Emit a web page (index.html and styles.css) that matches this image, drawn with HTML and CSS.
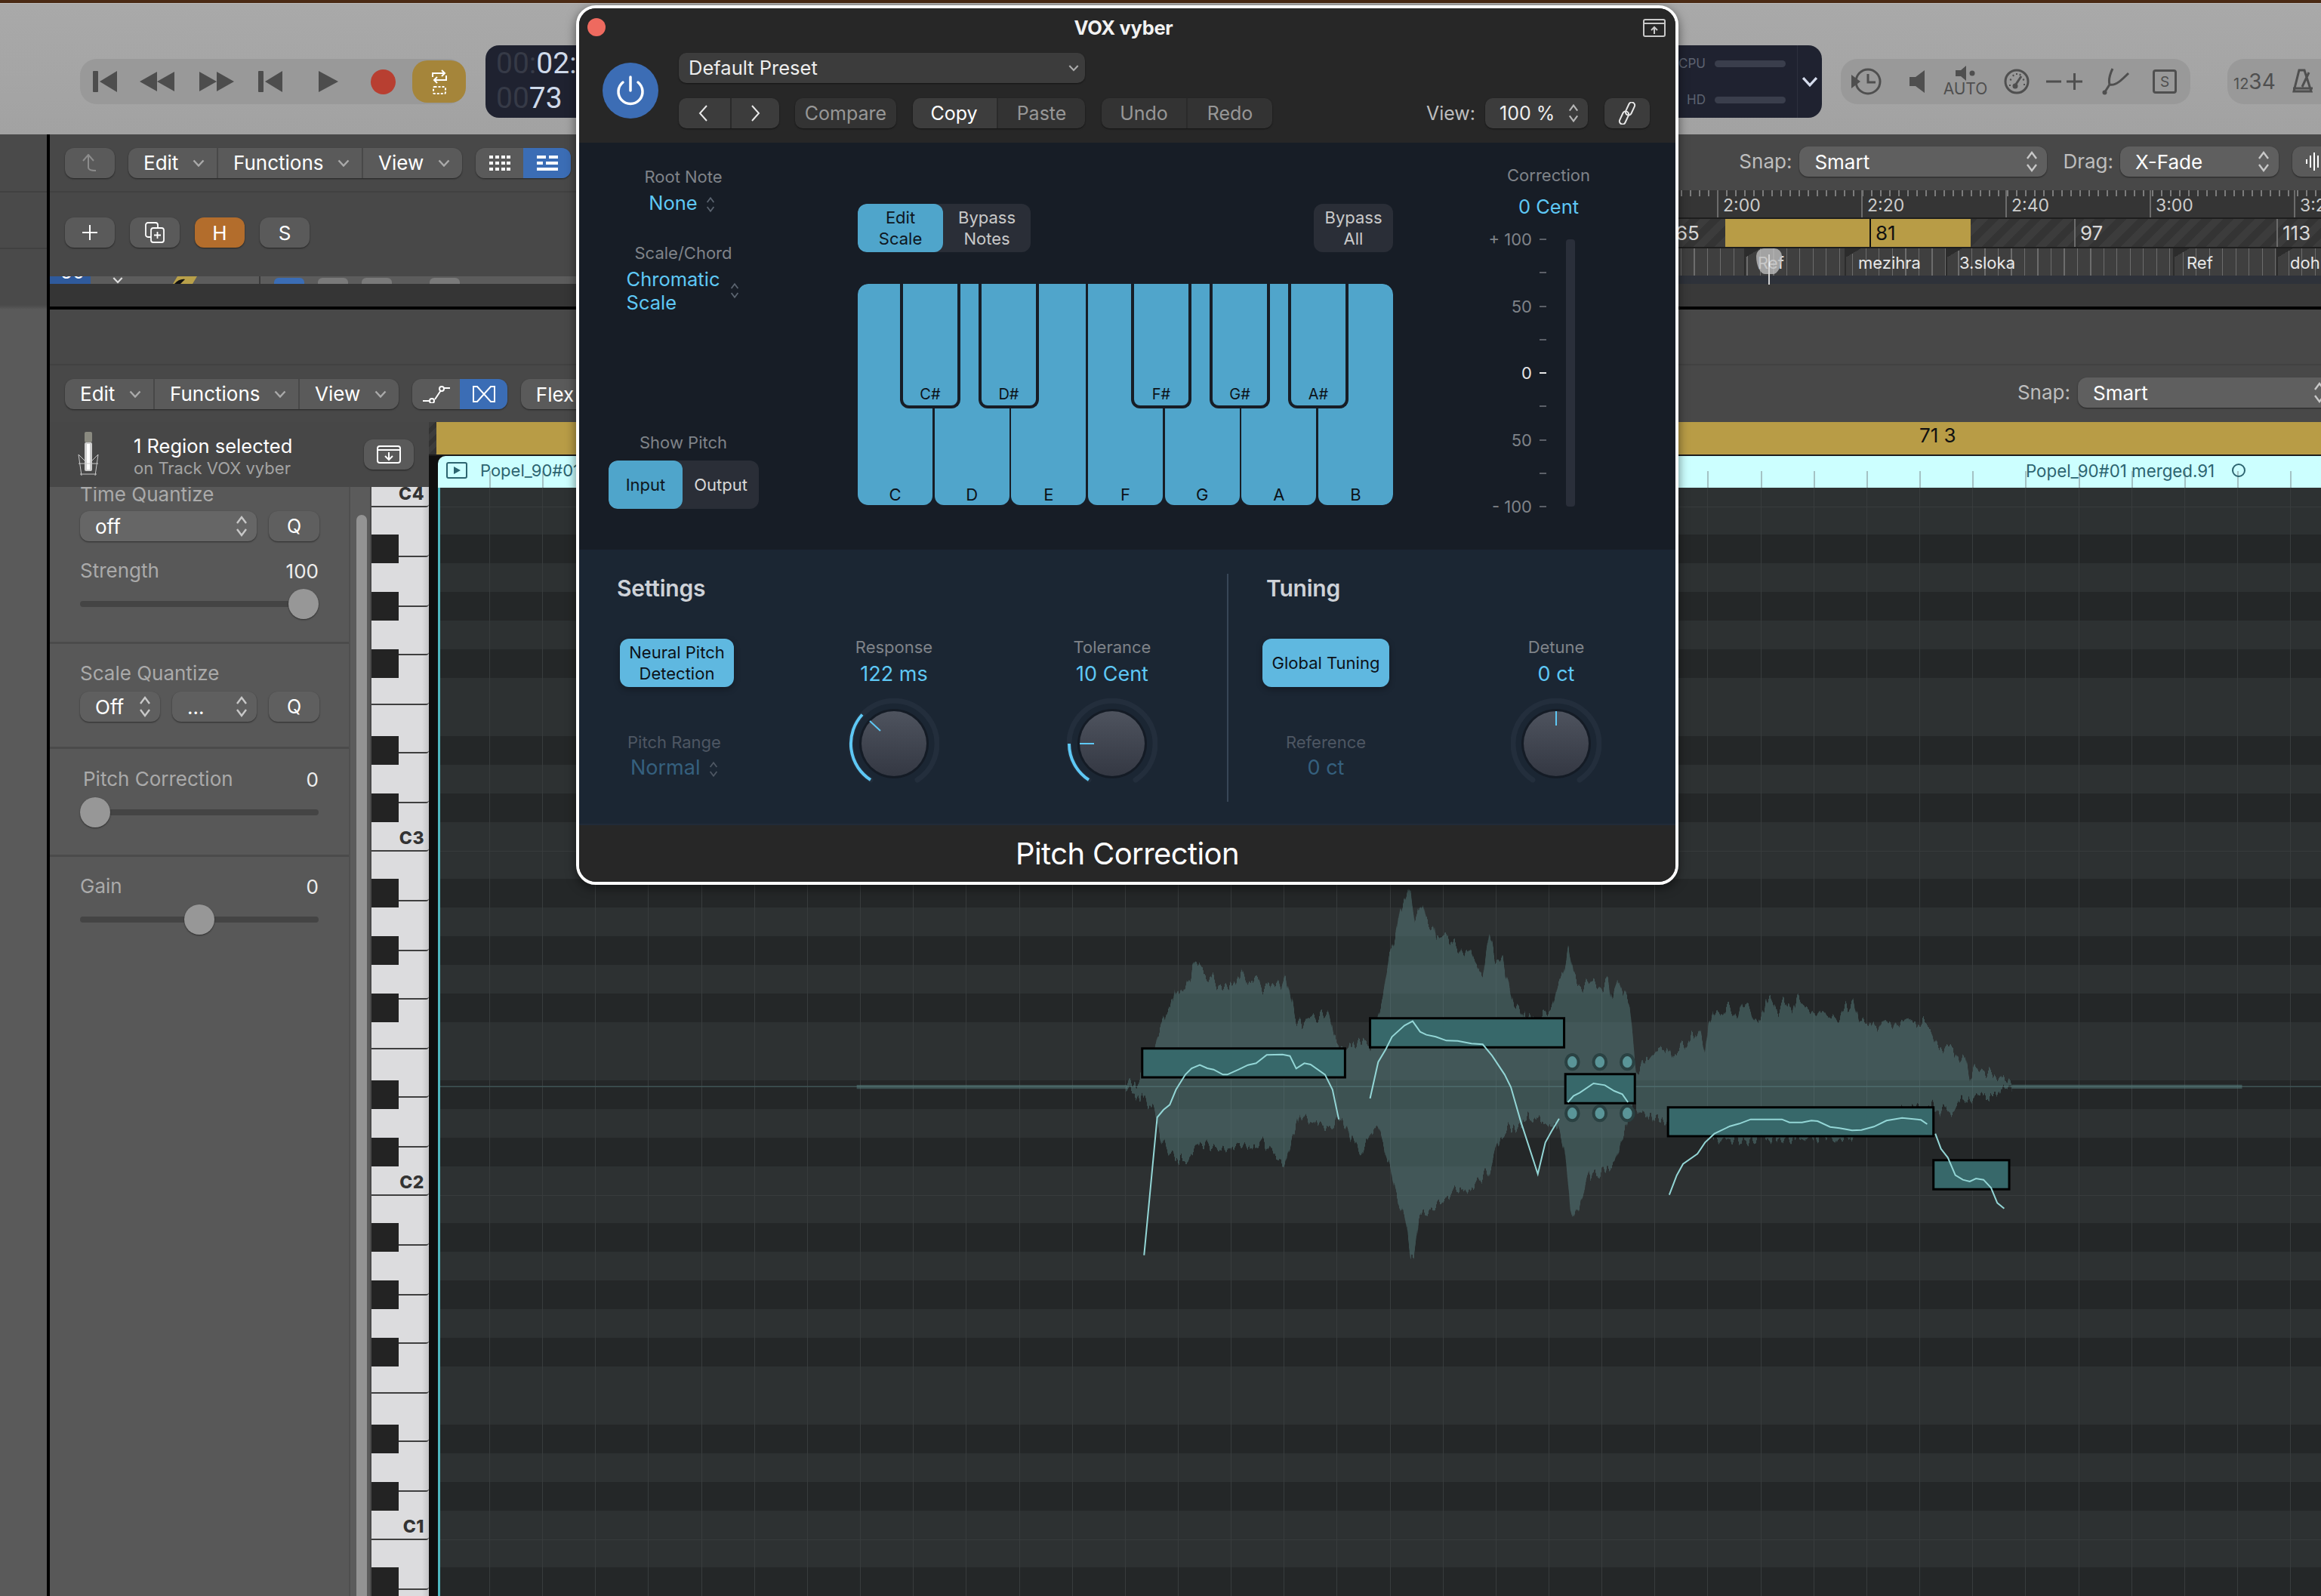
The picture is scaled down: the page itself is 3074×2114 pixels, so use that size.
FILE: index.html
```html
<!DOCTYPE html>
<html lang="en">
<head>
<meta charset="utf-8">
<title>VOX vyber - Pitch Correction</title>
<link rel="stylesheet" href="styles.css">
</head>
<body>
<svg class="sprite" width="0" height="0" aria-hidden="true">
  <defs>
    <linearGradient id="knobface" x1="0" y1="0" x2="0" y2="1"><stop offset="0" stop-color="#4e535e"/><stop offset="1" stop-color="#343843"/></linearGradient>
    <filter id="jag" filterUnits="userSpaceOnUse" x="-100" y="-100" width="2200" height="1800" color-interpolation-filters="sRGB">
      <feTurbulence type="fractalNoise" baseFrequency="0.16 0.004" numOctaves="2" seed="7" result="n"/>
      <feColorMatrix in="n" type="matrix" values="1 0 0 0 0  0 0 0 0 .5  0 0 0 0 0  0 0 0 0 1" result="m"/>
      <feDisplacementMap in="SourceGraphic" in2="m" scale="110" xChannelSelector="G" yChannelSelector="R"/>
    </filter>
  </defs>
  <symbol id="chev" viewBox="0 0 16 10"><path d="M1.5 1.5 8 8.5l6.500-7" fill="none" stroke="currentColor" stroke-width="2.400"/></symbol>
  <symbol id="updown" viewBox="0 0 16 30"><path d="M2 11 8 3l6 8M2 19l6 8 6-8" fill="none" stroke="currentColor" stroke-width="2.400"/></symbol>
</svg>
<div class="app">
  <div class="wood"></div>
  <header class="transport">
    <div class="tgroup">
      <svg class="ti" width="32" height="28" viewBox="0 0 32 28"><rect width="7" height="28" rx="1"/><path d="M32 0v28L9 14z"/></svg>
      <svg class="ti" width="46" height="26" viewBox="0 0 46 26"><path d="M23 0v26L0 13zM46 0v26L23 13z"/></svg>
      <svg class="ti" width="46" height="26" viewBox="0 0 46 26"><path d="M0 0v26l23-13zM23 0v26l23-13z"/></svg>
      <svg class="ti" width="32" height="28" viewBox="0 0 32 28"><rect width="7" height="28" rx="1"/><path d="M32 0v28L9 14z"/></svg>
      <svg class="ti" width="26" height="28" viewBox="0 0 26 28"><path d="M0 0v28l26-14z"/></svg>
      <span class="rec"></span>
      <span class="cycle">
        <svg width="24" height="34" viewBox="0 0 24 34" fill="none" stroke="#fff" stroke-width="2"><path d="M3 11V6h15M15 2l4 4-4 4M21 9v6H6M9 11l-4 4 4 4"/><rect x="4" y="24" width="16" height="9" rx="1.500" stroke-dasharray="3 2"/></svg>
      </span>
    </div>
    <div class="lcd">
      <div class="clock">
        <div><span class="dim">00:</span>02:</div>
        <div><span class="dim">00</span>73</div>
      </div>
      <div class="meters">
        <div class="meter-labels">
          <div class="mrow"><span class="mlabel">CPU</span><span class="mbar"></span></div>
          <div class="mrow"><span class="mlabel">HD</span><span class="mbar"></span></div>
        </div>
        <div class="mchev"><svg width="22" height="14"><use href="#chev"/></svg></div>
      </div>
    </div>
    <div class="igroup">
      <svg class="gi" width="42" height="36" viewBox="0 0 42 36" fill="none" stroke="#4f4f4f" stroke-width="3"><circle cx="23" cy="18" r="16"/><path d="M23 8v11h10"/><path d="M1 9v18l12-9z" fill="#4f4f4f" stroke="none"/></svg>
      <svg class="gi" width="20" height="30" viewBox="0 0 20 30"><path d="M20 0v30L8 21H0V9h8z" fill="#4f4f4f"/></svg>
      <div class="auto"><svg width="26" height="20" viewBox="0 0 26 20"><path d="M14 0v20l-7-6H0V6h7z" fill="#4f4f4f"/><circle cx="22" cy="10" r="3.500" fill="#4f4f4f"/></svg><span>AUTO</span></div>
      <svg class="gi" width="34" height="34" viewBox="0 0 34 34" fill="none" stroke="#4f4f4f" stroke-width="3"><circle cx="17" cy="17" r="15"/><path d="M15 22 23 10" /><circle cx="15" cy="23" r="2" fill="#4f4f4f"/><path d="M7 22h2M8 14l2 1M12 8l1 2M17 6v2M22 7l-1 2M26 21h2M27 14l-2 1" stroke-width="2"/></svg>
      <svg class="gi" width="48" height="22" viewBox="0 0 48 22" fill="none" stroke="#4f4f4f" stroke-width="3"><path d="M0 11h20M27 11h21M37.500 0v22"/></svg>
      <svg class="gi" width="38" height="36" viewBox="0 0 38 36" fill="none" stroke="#4f4f4f" stroke-width="3"><path d="M3 33 10 22C8 14 11 7 14 1M10 22C18 24 26 16 35 7"/><circle cx="3.500" cy="32.500" r="3" fill="#4f4f4f" stroke="none"/></svg>
      <div class="sbox">S</div>
    </div>
    <div class="igroup igroup-end">
      <div class="count"><small>12</small>34</div>
      <svg class="gi" width="32" height="36" viewBox="0 0 32 36" fill="none" stroke="#4f4f4f" stroke-width="3"><path d="M11 3h7l9 28H4zM3 27h26M15 25 24 6"/></svg>
    </div>
  </header>

  <div class="workspace">
    <aside class="side"></aside>
    <main class="main">
      <div class="toolbar">
        <div class="btn back"><svg width="22" height="24" viewBox="0 0 22 24" fill="none" stroke="#8c8c8c" stroke-width="2"><path d="M2 9 9 1l7 8M9 1v17c0 3 3 4 10 4"/></svg></div>
        <div class="seggroup">
          <div class="seg s1">Edit<svg width="16" height="10"><use href="#chev"/></svg></div>
          <div class="seg s2">Functions<svg width="16" height="10"><use href="#chev"/></svg></div>
          <div class="seg s3">View<svg width="16" height="10"><use href="#chev"/></svg></div>
        </div>
        <div class="pair">
          <div class="pbtn"><svg width="28" height="20" viewBox="0 0 28 20" fill="#fff"><path d="M0 0h5v4H0zM8 0h5v4H8zM16 0h5v4h-5zM23 0h5v4h-5zM0 8h5v4H0zM8 8h5v4H8zM16 8h5v4h-5zM23 8h5v4h-5zM0 16h5v4H0zM8 16h5v4H8zM16 16h5v4h-5zM23 16h5v4h-5z"/></svg></div>
          <div class="pbtn on"><svg width="28" height="20" viewBox="0 0 28 20" fill="#fff"><path d="M0 0h12v4H0zM16 0h12v4H16zM0 8h8v4H0zM12 8h16v4H12zM0 16h28v4H0z"/></svg></div>
        </div>
        <div class="spacer"></div>
        <div class="filters">
          <span class="flabel">Snap:</span>
          <div class="sel snap1"><span>Smart</span><svg width="16" height="30"><use href="#updown"/></svg></div>
          <span class="flabel drag">Drag:</span>
          <div class="sel drag1"><span>X-Fade</span><svg width="16" height="30"><use href="#updown"/></svg></div>
          <div class="btn wavebtn"><svg width="26" height="24" viewBox="0 0 26 24" fill="none" stroke="#fff" stroke-width="2"><path d="M2 9v6M7 4v16M12 0v24M17 4v16M22 8v8"/></svg></div>
        </div>
      </div>

      <section class="tracks">
        <div class="tracks-left">
          <div class="trow">
            <div class="btn sq"><svg width="24" height="24" viewBox="0 0 24 24" stroke="#fff" stroke-width="2"><path d="M12 2v20M2 12h20"/></svg></div>
            <div class="btn sq"><svg width="28" height="28" viewBox="0 0 28 28" fill="none" stroke="#fff" stroke-width="1.800"><rect x="2" y="1" width="16" height="19" rx="3"/><rect x="9" y="8" width="17" height="19" rx="3" fill="#5a5a5a"/><path d="M17.500 13v9M13 17.500h9"/></svg></div>
            <div class="btn sq orange">H</div>
            <div class="btn sq">S</div>
          </div>
          <div class="stub">
            <span class="stub-num"><b>50</b></span>
            <svg class="stub-chev" width="14" height="10"><use href="#chev"/></svg>
            <svg class="stub-gtr" width="38" height="10" viewBox="0 0 38 10"><path d="M4 10 10 0h26l-6 10z" fill="#b8a04a"/><path d="M6 10c4-5 10-7 14-6l-6 6z" fill="#111"/></svg>
            <span class="stub-div"></span>
            <span class="stub-b blue"></span><span class="stub-b"></span><span class="stub-b"></span><span class="stub-b narrow"></span>
          </div>
          <div class="stub-dark"></div>
        </div>
        <div class="timeline">
          <div class="ruler">
            <span>2:00</span><span>2:20</span><span>2:40</span><span>3:00</span><span>3:20</span>
          </div>
          <div class="bars">
            <span class="bar b65">65</span>
            <span class="bar gold g1"></span>
            <span class="bar gold g2">81</span>
            <span class="bar b-h1"></span>
            <span class="bar b97">97</span>
            <span class="bar b113">113</span>
          </div>
          <div class="markers">
            <span class="mk m0"></span>
            <span class="mk m1">Ref</span>
            <span class="mk m2">mezihra</span>
            <span class="mk m3">3.sloka</span>
            <span class="mk m4">Ref</span>
            <span class="mk m5">dohra</span>
            <div class="playhead"><i></i></div>
          </div>
          <div class="tstrip"></div>
        </div>
      </section>
      <div class="hline"></div>
      <div class="gap-bar"></div>

      <div class="toolbar toolbar2">
        <div class="seggroup">
          <div class="seg s1">Edit<svg width="16" height="10"><use href="#chev"/></svg></div>
          <div class="seg s2">Functions<svg width="16" height="10"><use href="#chev"/></svg></div>
          <div class="seg s3">View<svg width="16" height="10"><use href="#chev"/></svg></div>
        </div>
        <div class="pair">
          <div class="pbtn"><svg width="36" height="24" viewBox="0 0 36 24" fill="none" stroke="#fff" stroke-width="2"><path d="M0 21h9M16 19 24 7M28 4h8"/><circle cx="12" cy="21" r="3"/><circle cx="25" cy="5" r="3"/></svg></div>
          <div class="pbtn on"><svg width="32" height="24" viewBox="0 0 32 24" fill="none" stroke="#fff" stroke-width="2"><path d="M2 2h5l18 20h5V2h-5L7 22H2z"/></svg></div>
        </div>
        <div class="btn flex-btn">Flex</div>
        <div class="spacer"></div>
        <div class="filters">
          <span class="flabel">Snap:</span>
          <div class="sel snap2"><span>Smart</span><svg width="16" height="30"><use href="#updown"/></svg></div>
        </div>
      </div>

      <section class="editor">
        <div class="editor-left">
          <div class="rhead">
            <svg class="mic" width="28" height="60" viewBox="0 0 28 60"><rect x="9" y="0" width="10" height="14" rx="2" fill="#8a8a80"/><rect x="9" y="14" width="10" height="38" rx="2" fill="#cfcfcf"/><rect x="12" y="16" width="4" height="34" fill="#fff"/><path d="M1 30 5 58M27 30l-4 28M1 42h26M3 56h22M1 30l8 8M27 30l-8 8" stroke="#c8c8c8" stroke-width="1" fill="none"/></svg>
            <div class="rtext"><div class="rt1">1 Region selected</div><div class="rt2">on Track VOX vyber</div></div>
            <div class="btn rbtn"><svg width="32" height="24" viewBox="0 0 32 24" fill="none" stroke="#fff" stroke-width="2"><rect x="1" y="1" width="30" height="22" rx="3"/><path d="M1 6h30M16 9v10M11 14l5 5 5-5"/></svg></div>
          </div>
          <div class="editor-cols">
            <div class="inspector">
              <div class="isec i1">
                <div class="ilabel top">Time Quantize</div>
                <div class="irow">
                  <div class="sel iw1"><span>off</span><svg width="16" height="30"><use href="#updown"/></svg></div>
                  <div class="btn qbtn">Q</div>
                </div>
                <div class="ivalrow"><span class="ilabel">Strength</span><span class="ival">100</span></div>
                <div class="slider"><span class="thumb t-end"></span></div>
              </div>
              <div class="isec i2">
                <div class="ilabel">Scale Quantize</div>
                <div class="irow">
                  <div class="sel iw2"><span>Off</span><svg width="16" height="30"><use href="#updown"/></svg></div>
                  <div class="sel iw3"><span>...</span><svg width="16" height="30"><use href="#updown"/></svg></div>
                  <div class="btn qbtn">Q</div>
                </div>
              </div>
              <div class="isec i3">
                <div class="ivalrow indent"><span class="ilabel">Pitch Correction</span><span class="ival">0</span></div>
                <div class="slider"><span class="thumb t-start"></span></div>
              </div>
              <div class="isec i4">
                <div class="ivalrow"><span class="ilabel">Gain</span><span class="ival">0</span></div>
                <div class="slider"><span class="thumb t-mid"></span></div>
              </div>
            </div>
            <div class="scroll"><div class="scroll-thumb"></div></div>
            <div class="piano">
              <div class="octave first"><i class="wk a"></i><i class="wk a"></i><i class="wk b"></i><i class="wk a"></i><i class="wk b"></i><i class="wk a"></i><i class="wk a lab"><em>C4</em></i><u class="k1"></u><u class="k2"></u><u class="k3"></u><u class="k4"></u><u class="k5"></u></div>
              <div class="octave"><i class="wk a"></i><i class="wk a"></i><i class="wk b"></i><i class="wk a"></i><i class="wk b"></i><i class="wk a"></i><i class="wk a lab"><em>C3</em></i><u class="k1"></u><u class="k2"></u><u class="k3"></u><u class="k4"></u><u class="k5"></u></div>
              <div class="octave"><i class="wk a"></i><i class="wk a"></i><i class="wk b"></i><i class="wk a"></i><i class="wk b"></i><i class="wk a"></i><i class="wk a lab"><em>C2</em></i><u class="k1"></u><u class="k2"></u><u class="k3"></u><u class="k4"></u><u class="k5"></u></div>
              <div class="octave"><i class="wk a"></i><i class="wk a"></i><i class="wk b"></i><i class="wk a"></i><i class="wk b"></i><i class="wk a"></i><i class="wk a lab"><em>C1</em></i><u class="k1"></u><u class="k2"></u><u class="k3"></u><u class="k4"></u><u class="k5"></u></div>
              <div class="octave"><i class="wk a"></i><i class="wk a"></i><i class="wk b"></i><i class="wk a"></i><i class="wk b"></i><i class="wk a"></i><i class="wk a lab"><em>C0</em></i><u class="k1"></u><u class="k2"></u><u class="k3"></u><u class="k4"></u><u class="k5"></u></div>
            </div>
          </div>
        </div>
        <div class="lane">
          <div class="gold-row"><span class="hatch"></span><span class="gold-main">71 3</span></div>
          <div class="region">
            <svg class="play" width="28" height="22" viewBox="0 0 28 22"><rect x="1" y="1" width="26" height="20" rx="2" fill="none" stroke="#2c6470" stroke-width="2"/><path d="M10 6v10l9-5z" fill="#2c6470"/></svg>
            <span class="rname rn1">Popel_90#01 merged.91</span>
            <span class="rname rn2">Popel_90#01 merged.91</span>
            <span class="rloop"></span>
          </div>
          <div class="grid">
            <svg class="wave" width="1300" height="520" viewBox="0 0 1568 1560" preserveAspectRatio="none">
              <path class="cline" d="M-990 838H2400"/>
              <path class="wf" d="M-320 831H112V847H-320ZM1525 830H1893V846H1525Z"/>
              <path class="wf" filter="url(#jag)" d="M110 830 120 818 130 810 140 770 155 680 160 620 165 600 175 540 185 500 188 440 195 470 205 430 212 400 220 345 232 360 240 380 250 410 258 440 275 442 285 430 295 385 305 432 312 410 320 412 328 445 340 440 352 420 358 448 365 395 372 470 380 560 388 578 400 570 412 578 420 570 432 545 438 600 445 650 455 690 470 680 500 680 512 560 520 490 530 330 540 255 548 155 556 100 565 40 572 180 584 110 590 180 600 190 606 255 620 225 630 262 640 290 650 320 660 295 668 345 680 395 690 230 700 320 712 330 722 450 730 530 738 516 745 560 755 545 765 560 790 540 800 430 808 390 817 280 825 390 840 440 855 428 868 450 880 410 887 490 898 415 906 470 915 520 920 640 925 800 938 740 950 700 960 680 968 690 975 670 982 720 995 670 1005 690 1020 630 1028 610 1035 700 1040 590 1048 535 1060 555 1075 520 1085 570 1095 505 1105 520 1120 580 1136 482 1150 530 1165 495 1175 540 1182 488 1195 520 1210 560 1218 535 1235 580 1250 550 1262 520 1272 505 1282 590 1300 580 1310 620 1325 565 1340 600 1358 575 1375 600 1395 600 1405 660 1420 690 1432 690 1442 740 1450 710 1458 810 1466 760 1480 780 1500 795 1512 810 1525 832V846L1510 856 1500 870 1480 870 1462 880 1445 900 1432 935 1420 910 1410 945 1400 920 1340 930 1280 1000 1270 1050 1240 1045 1100 1045 1080 1060 1060 1045 1040 1030 1000 1000 975 975 960 970 945 965 930 940 922 905 910 1000 900 1060 890 1140 870 1190 850 1190 840 1270 830 1355 820 1300 810 1100 800 1000 780 985 760 955 745 985 730 1000 708 1030 700 1090 690 1170 670 1220 655 1265 640 1235 620 1290 600 1330 578 1365 570 1510 565 1520 555 1350 540 1260 530 1130 512 995 500 1030 485 1120 470 1040 460 985 450 965 440 1005 420 985 405 970 390 955 375 1040 362 1140 350 1130 332 1060 315 1080 298 1070 285 1085 272 1095 250 1075 228 1070 208 1140 190 1140 178 1100 165 1030 155 920 140 875 125 855 110 848Z"/>
              <g class="notes">
                <rect x="136" y="686" width="324" height="115"/>
                <rect x="500" y="566" width="310" height="116"/>
                <rect x="812" y="788" width="111" height="116"/>
                <rect x="976" y="920" width="424" height="115"/>
                <rect x="1400" y="1130" width="121" height="116"/>
              </g>
              <g class="dots">
                <ellipse cx="823" cy="740" rx="10" ry="29"/><ellipse cx="867" cy="740" rx="10" ry="29"/><ellipse cx="911" cy="740" rx="10" ry="29"/>
                <ellipse cx="823" cy="944" rx="10" ry="29"/><ellipse cx="867" cy="944" rx="10" ry="29"/><ellipse cx="911" cy="944" rx="10" ry="29"/>
              </g>
              <g class="curves">
                <path d="M139 1508 160 960 170 930 180 910 190 850 205 790 215 765 228 752 240 765 250 770 265 790 272 790 290 770 305 752 318 745 335 712 360 710 372 716 382 766 395 745 405 750 428 790 440 850 450 968"/>
                <path d="M500 885 513 740 525 690 535 640 555 595 568 578 580 620 590 632 605 640 622 655 640 656 662 667 680 670 695 715 715 790 725 840 740 970 768 1185 780 1060 790 1015 802 965"/>
                <path d="M816 900 825 875 835 862 857 825 875 832 890 855 903 868 912 900"/>
                <path d="M978 1268 990 1190 1000 1145 1023 1105 1035 1060 1050 1025 1075 995 1090 985 1108 968 1158 968 1170 980 1190 980 1205 973 1215 975 1235 998 1250 1003 1270 1012 1285 1010 1305 997 1325 973 1350 962 1380 970 1390 987"/>
                <path d="M1403 1025 1412 1085 1423 1120 1435 1190 1447 1208 1458 1215 1468 1203 1480 1208 1492 1240 1502 1300 1513 1322"/>
              </g>
            </svg>
          </div>
        </div>
      </section>
    </main>
  </div>

  <div class="plugin">
    <div class="phead">
      <div class="ptitle-row">
        <span class="close"></span>
        <span class="ptitle">VOX vyber</span>
        <svg class="pexp" width="30" height="24" viewBox="0 0 30 24" fill="none" stroke="#c8c8c8" stroke-width="2"><rect x="1" y="1" width="28" height="22" rx="2"/><path d="M1 6h28M15 20v-9M11 15l4-4 4 4"/></svg>
      </div>
      <div class="pcontrols">
        <div class="power"><svg width="44" height="44" viewBox="0 0 44 44" fill="none" stroke="#fff" stroke-width="3.500" stroke-linecap="round"><path d="M12 11a16 16 0 1 0 20 0M22 4v18"/></svg></div>
        <div class="pstack">
          <div class="preset"><span>Default Preset</span><svg width="14" height="10"><use href="#chev"/></svg></div>
          <div class="prow">
            <div class="pgrp nav"><span class="pc"><svg width="14" height="24" viewBox="0 0 14 24" fill="none" stroke="#e8e8e8" stroke-width="2"><path d="M12 2 3 12l9 10"/></svg></span><span class="pc"><svg width="14" height="24" viewBox="0 0 14 24" fill="none" stroke="#e8e8e8" stroke-width="2"><path d="M2 2l9 10-9 10"/></svg></span></div>
            <div class="pgrp compare"><span class="pc">Compare</span></div>
            <div class="pgrp copy"><span class="pc copy-on">Copy</span><span class="pc">Paste</span></div>
            <div class="pgrp undo"><span class="pc">Undo</span><span class="pc">Redo</span></div>
            <div class="spacer"></div>
            <span class="vlabel">View:</span>
            <div class="pgrp vbox"><span>100 %</span><svg width="14" height="26"><use href="#updown"/></svg></div>
            <div class="pgrp linkb"><svg width="26" height="30" viewBox="0 0 26 30" fill="none" stroke="#e8e8e8" stroke-width="2"><rect x="-4" y="-9" width="8" height="18" rx="4" transform="translate(17 9) rotate(25)"/><rect x="-4" y="-9" width="8" height="18" rx="4" transform="translate(9 21) rotate(25)"/></svg></div>
          </div>
        </div>
      </div>
    </div>

    <div class="pmain">
      <div class="pleft">
        <div class="plab">Root Note</div>
        <div class="pval root">None <svg width="12" height="22"><use href="#updown"/></svg></div>
        <div class="plab sc">Scale/Chord</div>
        <div class="chrom"><div class="pval chromt">Chromatic<br>Scale</div><svg width="12" height="22"><use href="#updown"/></svg></div>
        <div class="plab sp">Show Pitch</div>
        <div class="iotoggle"><span class="io on">Input</span><span class="io">Output</span></div>
      </div>
      <div class="pcenter">
        <div class="kb-top">
          <div class="kbg"><span class="kb on">Edit<br>Scale</span><span class="kb wide">Bypass<br>Notes</span></div>
          <div class="kbg"><span class="kb single">Bypass<br>All</span></div>
        </div>
        <div class="keyboard">
          <div class="ky">C</div><div class="ky">D</div><div class="ky">E</div><div class="ky">F</div><div class="ky">G</div><div class="ky">A</div><div class="ky">B</div>
          <div class="bk b1">C#</div><div class="bk b2">D#</div><div class="bk b3">F#</div><div class="bk b4">G#</div><div class="bk b5">A#</div>
        </div>
      </div>
      <div class="pright">
        <div class="plab">Correction</div>
        <div class="pval corr">0 Cent</div>
        <div class="scale">
          <div class="ticks">
            <div class="tk">+ 100<s></s></div><div class="tk"><s></s></div><div class="tk">50<s></s></div><div class="tk"><s></s></div><div class="tk zero">0<s></s></div><div class="tk"><s></s></div><div class="tk">50<s></s></div><div class="tk"><s></s></div><div class="tk">- 100<s></s></div>
          </div>
          <div class="cbar"></div>
        </div>
      </div>
    </div>

    <div class="psettings">
      <div class="pgroup settings">
        <h2>Settings</h2>
        <div class="pcols">
          <div class="pcol ca">
            <div class="blue-btn b-neural">Neural Pitch<br>Detection</div>
            <div class="plab dimmed">Pitch Range</div>
            <div class="pval faded">Normal <svg width="12" height="22"><use href="#updown"/></svg></div>
          </div>
          <div class="pcol cb">
            <div class="plab">Response</div>
            <div class="pval">122 ms</div>
            <svg class="knob" width="120" height="120" viewBox="-60 -60 120 120"><path class="ktrack" d="M-31 48A57 57 0 1 1 31 48"/><path class="karc" d="M-31 48A57 57 0 0 1-42-38.500"/><circle class="kshadow" r="46"/><circle class="kface" r="43"/><path class="kptr" d="M-32-30-18-17"/></svg>
          </div>
          <div class="pcol cc">
            <div class="plab">Tolerance</div>
            <div class="pval">10 Cent</div>
            <svg class="knob" width="120" height="120" viewBox="-60 -60 120 120"><path class="ktrack" d="M-31 48A57 57 0 1 1 31 48"/><path class="karc" d="M-31 48A57 57 0 0 1-57 0"/><circle class="kshadow" r="46"/><circle class="kface" r="43"/><path class="kptr" d="M-43 0H-24"/></svg>
          </div>
        </div>
      </div>
      <div class="pdiv"></div>
      <div class="pgroup tuning">
        <h2>Tuning</h2>
        <div class="pcols">
          <div class="pcol cd">
            <div class="blue-btn b-global">Global Tuning</div>
            <div class="plab dimmed">Reference</div>
            <div class="pval faded">0 ct</div>
          </div>
          <div class="pcol ce">
            <div class="plab">Detune</div>
            <div class="pval">0 ct</div>
            <svg class="knob" width="120" height="120" viewBox="-60 -60 120 120"><path class="ktrack" d="M-31 48A57 57 0 1 1 31 48"/><circle class="kshadow" r="46"/><circle class="kface" r="43"/><path class="kptr" d="M0-43V-24"/></svg>
          </div>
        </div>
      </div>
    </div>
    <div class="pfoot">Pitch Correction</div>
  </div>
</div>
</body>
</html>
```
FILE: styles.css
```css
* { box-sizing: border-box; }
html, body { margin: 0; padding: 0; background: #2a2a2a; }
body { font-family: Inter, "Liberation Sans", sans-serif; color: #fff; }
.sprite { position: absolute; width: 0; height: 0; }
.app { position: relative; width: 3074px; height: 2114px; overflow: hidden; display: flex; flex-direction: column; }
.spacer { flex: 1; }
.wood { height: 5px; background: #4a2a14; flex: none; border-bottom: 1px solid #bdbdbd; }

/* top transport */
.transport { height: 173px; flex: none; display: flex; align-items: center; padding: 33px 0 0 106px; background: linear-gradient(#a9a9a9, #a2a2a2); }
.tgroup { width: 510px; height: 60px; border-radius: 22px; background: #999; display: flex; align-items: center; padding-left: 17px; position: relative; flex: none; }
.ti { fill: #4d4d4d; flex: none; }
.tgroup .ti:nth-child(2) { margin-left: 30px; }
.tgroup .ti:nth-child(3) { margin-left: 33px; }
.tgroup .ti:nth-child(4) { margin-left: 32px; }
.tgroup .ti:nth-child(5) { margin-left: 48px; }
.rec { width: 33px; height: 33px; border-radius: 50%; background: #b83f31; margin-left: 43px; flex: none; }
.cycle { width: 71px; height: 56px; border-radius: 20px; background: #a5853a; margin-left: 22px; display: flex; align-items: center; justify-content: center; flex: none; }
.lcd { width: 1770px; height: 96px; margin-left: 27px; border-radius: 18px; background: #1f2230; display: flex; justify-content: space-between; flex: none; }
.clock { font-family: Roboto, sans-serif; font-size: 39px; line-height: 46px; color: #cfdaea; padding: 1px 0 0 14px; white-space: nowrap; }
.clock .dim { color: #363a47; }
.meters { display: flex; width: 190px; }
.meter-labels { width: 157px; display: flex; flex-direction: column; justify-content: center; gap: 31px; }
.mrow { display: flex; align-items: center; gap: 12px; height: 17px; }
.mlabel { width: 36px; font-size: 17px; color: #5d6270; text-align: right; }
.mbar { width: 94px; height: 9px; border-radius: 5px; background: #3a3e4c; }
.mchev { width: 33px; border-left: 1px solid #2c2f3d; display: flex; align-items: center; justify-content: center; color: #d5dcec; }
.igroup { width: 463px; height: 60px; margin-left: 25px; border-radius: 22px; background: #999; display: flex; align-items: center; padding-left: 13px; flex: none; }
.gi { flex: none; }
.igroup > :nth-child(2) { margin-left: 36px; }
.auto { margin-left: 24px; width: 60px; display: flex; flex-direction: column; align-items: center; color: #4f4f4f; font-size: 21px; line-height: 22px; }
.igroup > .gi:nth-child(4) { margin-left: 21px; }
.igroup > .gi:nth-child(5) { margin-left: 22px; }
.igroup > .gi:nth-child(6) { margin-left: 26px; }
.sbox { margin-left: 29px; width: 32px; height: 32px; border: 3px solid #4f4f4f; border-radius: 4px; display: flex; align-items: center; justify-content: center; color: #4f4f4f; font-size: 19px; }
.igroup-end { margin-left: 49px; width: 200px; padding-left: 8px; }
.count { color: #4f4f4f; font-size: 28px; width: 68px; }
.count small { font-size: 20px; }
.igroup-end .gi:nth-child(2) { margin-left: 8px; }

/* workspace */
.workspace { flex: 1; display: flex; min-height: 0; }
.side { width: 62px; flex: none; background:
  linear-gradient(#414141, #414141) 0 75px / 100% 2px no-repeat,
  linear-gradient(#414141, #414141) 0 150px / 100% 2px no-repeat,
  linear-gradient(#4a4a4a 0, #4a4a4a 226px, #5a5a5a 232px); }
.main { flex: 1; border-left: 4px solid #000; background: #484848; display: flex; flex-direction: column; min-width: 0; }

.toolbar { height: 75px; flex: none; display: flex; align-items: flex-start; padding: 18px 0 0 20px; background: #484848; }
.btn { height: 40px; border-radius: 12px; background: #5a5a5a; box-shadow: 0 1px 2px rgba(0,0,0,.5); display: flex; align-items: center; justify-content: center; font-size: 26px; color: #fff; flex: none; }
.back { width: 66px; margin-right: 18px; }
.seggroup { display: flex; height: 40px; border-radius: 12px; background: #5a5a5a; box-shadow: 0 1px 2px rgba(0,0,0,.5); font-size: 26px; line-height: 38px; flex: none; }
.seg { display: flex; align-items: center; justify-content: space-between; padding: 0 16px 0 20px; color: #fff; border-right: 2px solid #484848; }
.seg:last-child { border-right: 0; }
.seg svg { color: #aaa; }
.s1 { width: 119px; }
.s2 { width: 192px; }
.s3 { width: 131px; }
.pair { display: flex; width: 126px; height: 40px; margin-left: 18px; border-radius: 12px; overflow: hidden; box-shadow: 0 1px 2px rgba(0,0,0,.5); flex: none; }
.pbtn { flex: 1; background: #5a5a5a; display: flex; align-items: center; justify-content: center; }
.pbtn.on { background: #3b6db5; }
.filters { display: flex; margin-top: -2px; flex: none; }
.flabel { font-size: 26px; color: #bdbdbd; line-height: 40px; margin-right: 10px; }
.sel { height: 40px; border-radius: 12px; background: #5f5f5f; box-shadow: 0 1px 2px rgba(0,0,0,.5); display: flex; align-items: center; justify-content: space-between; padding: 0 12px 0 20px; font-size: 26px; color: #fff; flex: none; }
.sel svg { color: #c8c8c8; flex: none; }
.snap1 { width: 328px; }
.drag { margin-left: 21px; margin-right: 9px; }
.drag1 { width: 210px; }
.wavebtn { width: 60px; margin-left: 18px; margin-right: -22px; border-radius: 12px 0 0 12px; }
.snap2 { width: 340px; margin-right: -18px; }

/* tracks */
.tracks { height: 153px; flex: none; display: flex; }
.tracks-left { flex: 1; border-top: 2px solid #414141; display: flex; flex-direction: column; min-width: 0; }
.trow { height: 111px; display: flex; gap: 20px; padding: 33px 0 0 20px; }
.sq { width: 66px; }
.orange { background: #b36d2c; }
.stub { height: 10px; background: #5c5c5c; display: flex; overflow: hidden; position: relative; }
.stub-num { width: 54px; background: #2f5a9c; overflow: hidden; }
.stub-num b { display: block; font-size: 26px; line-height: 30px; margin: -21px 0 0 14px; font-weight: 400; }
.stub-chev { margin-left: 29px; color: #ddd; }
.stub-gtr { margin-left: 62px; }
.stub-div { width: 2px; margin-left: 80px; background: #3c3c3c; }
.stub-b { width: 40px; height: 8px; margin: 2px 0 0 18px; border-radius: 6px 6px 0 0; background: #7a7a7a; }
.stub-b.blue { background: #3b6db5; }
.stub-b.narrow { margin-left: 50px; }
.stub-dark { flex: 1; background: #353535; }
.timeline { width: 851px; flex: none; position: relative; background: #393939; display: flex; flex-direction: column; }
.ruler { height: 36px; display: flex; padding-left: 51px; background: #353535 repeating-linear-gradient(90deg, #7b7b7b 0 2px, transparent 2px 12px) 3px 0 / 100% 8px no-repeat; margin-top: -1px; }
.ruler span { width: 191px; flex: none; border-left: 2px solid #6c6c6c; padding-left: 6px; font-size: 23px; line-height: 40px; color: #ccc; white-space: nowrap; }
.bars { height: 41px; display: flex; border-top: 2px solid #1e1e1e; border-bottom: 2px solid #1e1e1e; background: repeating-linear-gradient(135deg, #3c3c3c 0 10px, #343434 10px 20px); }
.bar { font-size: 26px; line-height: 37px; color: #d8d8d8; flex: none; }
.b65 { width: 62px; text-indent: -4px; }
.gold { background: #b89c46; color: #111; }
.g1 { width: 191px; }
.g2 { width: 134px; border-left: 2px solid #111; padding-left: 6px; }
.b-h1 { width: 137px; }
.b97 { width: 268px; border-left: 2px solid #6c6c6c; padding-left: 6px; }
.b113 { flex: 1; border-left: 2px solid #6c6c6c; padding-left: 6px; }
.markers { height: 36px; display: flex; position: relative; background: repeating-linear-gradient(90deg, #6c6c6c 0 1px, transparent 1px 17.500px) 3px 0; background-color: #3f3f3f; }
.mk { font-size: 22px; line-height: 38px; color: #e8e8e8; padding-left: 16px; border-left: 2px solid #2c2c2c; overflow: hidden; white-space: nowrap; flex: none; background: linear-gradient(150deg, #2c2c2c 0 10px, transparent 10px) 0 0 / 28px 14px no-repeat; }
.m0 { width: 87px; border-left: 0; background: none; }
.m1 { width: 133px; }
.m2 { width: 134px; }
.m3 { width: 301px; }
.m4 { width: 137px; }
.m5 { flex: 1; }
.playhead { position: absolute; left: 103px; top: 0; width: 34px; height: 34px; background: #bfbfbf; opacity: .78; border-radius: 14px 14px 50% 50% / 14px 14px 100% 100%; }
.playhead i { position: absolute; left: 16px; top: 8px; width: 2px; height: 40px; background: #fff; }
.tstrip { height: 11px; background: #2e323a; }

.hline { height: 4px; flex: none; background: #000; }
.gap-bar { height: 74px; flex: none; background: #484848; border-bottom: 2px solid #414141; }
.toolbar2 { padding-top: 18px; }
.flex-btn { width: 90px; margin-left: 18px; }

/* editor */
.editor { flex: 1; display: flex; min-height: 0; }
.editor-left { width: 502px; flex: none; display: flex; flex-direction: column; min-height: 0; }
.rhead { height: 86px; flex: none; background: #474747; display: flex; align-items: center; padding-left: 37px; position: relative; z-index: 1; }
.mic { flex: none; }
.rtext { margin-left: 46px; width: 305px; padding-top: 6px; }
.rt1 { font-size: 25.500px; line-height: 30px; }
.rt2 { font-size: 22px; line-height: 29px; color: #a3a3a3; }
.rbtn { width: 66px; margin-left: 0; }
.editor-cols { flex: 1; display: flex; min-height: 0; overflow: hidden; }
.inspector { width: 398px; flex: none; background: #585858; border-right: 2px solid #4f4f4f; }
.isec { padding: 0 40px 0 40px; border-bottom: 3px solid #4b4b4b; }
.i1 { height: 213px; margin-top: -5px; }
.i2 { height: 139px; padding-top: 24px; }
.i3 { height: 143px; padding-top: 25px; }
.i4 { border-bottom: 0; padding-top: 24px; }
.ilabel { font-size: 26px; line-height: 30px; color: #aaa; }
.top { margin-bottom: 8px; }
.irow { display: flex; gap: 16px; margin-top: 9px; }
.i1 .irow { margin-top: -1px; }
.qbtn { width: 67px; font-size: 25px; background: #5f5f5f; }
.iw1 { width: 234px; background: #666; }
.iw2 { width: 106px; padding-right: 12px; }
.iw3 { width: 112px; padding-right: 12px; }
.ivalrow { display: flex; justify-content: space-between; align-items: center; height: 30px; }
.i1 .ivalrow { margin-top: 24px; }
.ival { font-size: 26px; color: #eee; }
.indent { padding-left: 4px; }
.slider { height: 8px; border-radius: 4px; background: #444; margin-top: 25px; position: relative; }
.thumb { position: absolute; top: -16px; width: 40px; height: 40px; border-radius: 50%; background: #979797; box-shadow: 0 1px 2px rgba(0,0,0,.5); }
.t-end { right: 0; }
.t-start { left: 0; }
.t-mid { left: 138px; }
.scroll { width: 28px; flex: none; background: #5b5b5b; padding: 37px 4px 0 8px; border-right: 2px solid #4a4a4a; }
.scroll-thumb { height: 100%; min-height: 1500px; background: #939393; border-radius: 8px 8px 0 0; }
.piano { width: 76px; flex: none; background: #d9d9db; }
.octave { height: 456px; display: flex; flex-direction: column; position: relative; }
.octave.first { margin-top: -429px; }
.wk { display: block; border-bottom: 2px solid #3f3f3f; border-radius: 0 0 4px 0; background: linear-gradient(90deg, #dcdcde 88%, #c4c4c6); position: relative; font-style: normal; }
.wk.a { height: 66px; }
.wk.b { height: 64px; }
.octave .wk:last-of-type { height: 64px; }
.wk em { position: absolute; right: 6px; bottom: 4px; font: 800 23px/24px Inter, sans-serif; color: #333; letter-spacing: .5px; }
.octave u { position: absolute; left: 0; width: 36px; height: 38px; background: #232323; text-decoration: none; }
.k1 { top: 36px; }
.k2 { top: 112px; }
.k3 { top: 188px; }
.k4 { top: 303px; }
.k5 { top: 379px; }

.lane { flex: 1; display: flex; flex-direction: column; min-width: 0; background: #0f0f0f; }
.gold-row { height: 45px; flex: none; display: flex; border-bottom: 2px solid #1c1c1c; }
.hatch { width: 10px; background: repeating-linear-gradient(135deg, #3c3c3c 0 6px, #333 6px 12px); }
.gold-main { flex: 1; background: #b89c46; color: #111; font-size: 26px; line-height: 36px; padding-left: 1964px; }
.region { height: 42px; flex: none; margin-left: 12px; border-radius: 10px 0 0 0; display: flex; align-items: center; padding-bottom: 4px; background: #ccffff repeating-linear-gradient(90deg, #a4c2c4 0 2px, transparent 2px 70.150px) 68px 20px / 100% 22px no-repeat; position: relative; font-size: 22px; color: #2c6470; }
.play { margin-left: 11px; flex: none; }
.rname { white-space: nowrap; }
.rn1 { margin-left: 17px; width: 2047px; overflow: hidden; }
.rn2 { font-size: 22.300px; }
.rloop { width: 18px; height: 18px; border: 2px solid #2c6470; border-radius: 50%; margin-left: 23px; flex: none; }
.grid { flex: 1; position: relative; margin-left: 12px; border-left: 3px solid #4fb7c0; overflow: hidden;
  background-color: #2d3132;
  background-image:
    repeating-linear-gradient(90deg, #383c3d 0 1px, transparent 1px 70.150px),
    linear-gradient(#2d3132 0 36px, #242728 36px 74px, #2d3132 74px 112px, #242728 112px 150px, #2d3132 150px 188px, #242728 188px 226px, #2d3132 226px 303px, #242728 303px 341px, #2d3132 341px 379px, #242728 379px 417px, #2d3132 417px 455px, #373b3c 455px 456px);
  background-position: 65px 0, 0 26px;
  background-size: 100% 100%, 100% 456px;
  background-repeat: no-repeat, repeat-y;
}
.wave { position: absolute; left: 817px; top: 514px; overflow: visible; }
.cline { stroke: #3f5556; stroke-width: 1.500px; vector-effect: non-scaling-stroke; fill: none; }
.wf { fill: rgba(92, 134, 134, .46); }
.notes rect { fill: #37686a; stroke: #000; stroke-width: 3px; vector-effect: non-scaling-stroke; }
.dots ellipse { fill: #5a9598; stroke: #2a4142; stroke-width: 4px; vector-effect: non-scaling-stroke; }
.curves path { fill: none; stroke: #93d6d6; stroke-width: 2px; vector-effect: non-scaling-stroke; }

/* plugin window */
.plugin { position: absolute; left: 763px; top: 7px; width: 1460px; height: 1165px; border: 4px solid #fff; border-radius: 26px; overflow: hidden; background: #272727; display: flex; flex-direction: column; box-shadow: 0 4px 14px rgba(0,0,0,.5); z-index: 5; }
.phead { height: 178px; flex: none; background: #272727; }
.ptitle-row { height: 50px; display: grid; grid-template-columns: 1fr auto 1fr; align-items: center; padding: 0 13px 0 11px; }
.close { width: 24px; height: 24px; border-radius: 50%; background: #ee6a5f; }
.ptitle { font-size: 25.500px; font-weight: 700; color: #f2f2f2; margin-right: 8px; letter-spacing: -.3px; }
.pexp { justify-self: end; margin-top: 2px; }
.pcontrols { display: flex; align-items: center; padding: 9px 34px 0 31px; }
.power { width: 74px; height: 74px; border-radius: 50%; background: #3c6db5; display: flex; align-items: center; justify-content: center; flex: none; }
.pstack { flex: 1; margin-left: 27px; display: flex; flex-direction: column; gap: 20px; }
.preset { width: 538px; height: 40px; border-radius: 10px; background: #3c3c3c; display: flex; align-items: center; justify-content: space-between; padding: 0 8px 0 13px; font-size: 25.500px; line-height: 38px; color: #eee; box-shadow: 0 1px 2px rgba(0,0,0,.5); }
.preset svg { color: #aaa; }
.prow { display: flex; align-items: center; }
.pgrp { height: 40px; border-radius: 10px; background: #333; display: flex; box-shadow: 0 1px 2px rgba(0,0,0,.5); font-size: 25px; color: #979797; overflow: hidden; flex: none; }
.pc { flex: 1; display: flex; align-items: center; justify-content: center; }
.pc + .pc { border-left: 2px solid #2a2a2a; }
.nav { width: 133px; background: #3c3c3c; }
.nav .pc:first-child { padding-right: 5px; }
.compare { width: 134px; margin-left: 21px; }
.copy { width: 228px; margin-left: 22px; }
.copy-on { background: #3d3d3d; color: #fff; width: 111px; flex: none; padding-right: 2px; }
.undo { width: 226px; margin-left: 22px; }
.vlabel { font-size: 25px; color: #bdbdbd; margin-right: 13px; }
.vbox { width: 136px; background: #3c3c3c; color: #eee; align-items: center; justify-content: space-between; padding: 0 12px 0 19px; }
.vbox svg { color: #b5b5b5; }
.linkb { width: 60px; margin-left: 22px; background: #3c3c3c; align-items: center; justify-content: center; }

.pmain { height: 539px; flex: none; background: #171d26; display: flex; }
.pleft { width: 276px; display: flex; flex-direction: column; align-items: center; padding: 31px 0 54px; flex: none; }
.plab { font-size: 22px; line-height: 28px; color: #7f8389; white-space: nowrap; }
.pval { font-size: 27px; line-height: 34px; color: #5ec8f5; white-space: nowrap; }
.pval svg { color: #5b6470; vertical-align: -4px; margin-left: 4px; }
.root { margin-top: 4px; margin-left: -4px; font-size: 25.500px; }
.sc { margin-top: 35px; }
.chrom { margin-top: 5px; display: flex; align-items: center; gap: 14px; margin-left: -1px; }
.chromt { line-height: 31px; font-size: 25.500px; }
.chrom svg { color: #5b6470; }
.sp { margin-top: auto; }
.iotoggle { display: flex; width: 199px; height: 64px; margin-top: 10px; border-radius: 12px; overflow: hidden; background: #2a2e37; margin-left: 1px; flex: none; font-size: 22px; }
.io { flex: 1; display: flex; align-items: center; justify-content: center; color: #d8d8d8; }
.io.on { background: #4fa5cb; color: #0e1620; flex: none; width: 98px; border-radius: 12px; }

.pcenter { width: 709px; margin-left: 93px; flex: none; padding-top: 81px; }
.kb-top { display: flex; justify-content: space-between; }
.kbg { display: flex; border-radius: 12px; overflow: hidden; background: #2a2e37; height: 64px; }
.kb { width: 113px; font-size: 22px; line-height: 28px; text-align: center; padding-top: 4px; color: #c9c9c9; display: block; }
.kb.on { background: #4fa5cb; color: #0e1620; border-radius: 12px; }
.kb.wide { width: 116px; }
.kb.single { width: 105px; }
.keyboard { margin-top: 42px; height: 293px; display: flex; gap: 2.500px; position: relative; border-radius: 14px; overflow: hidden; }
.ky { flex: 1; background: #50a5cb; color: #0d1218; font-size: 22px; text-align: center; display: flex; align-items: flex-end; justify-content: center; padding-bottom: 1px; border-radius: 0 0 12px 12px; }
.ky:first-child { border-radius: 14px 0 12px 12px; }
.ky:nth-child(7) { border-radius: 0 14px 14px 12px; }
.bk { position: absolute; top: -4px; width: 80px; height: 169px; background: #50a5cb; border: 4px solid #171d26; border-top: 0; border-radius: 0 0 12px 12px; color: #0d1218; font-size: 20px; display: flex; align-items: flex-end; justify-content: center; padding-bottom: 3px; }
.b1 { left: 56px; }
.b2 { left: 160px; }
.b3 { left: 362px; }
.b4 { left: 466px; }
.b5 { left: 570px; }
.pright { width: 200px; margin-left: 106px; flex: none; display: flex; flex-direction: column; align-items: center; padding-top: 29px; }
.corr { margin-top: 11px; font-size: 25.500px; }
.scale { display: flex; width: 200px; margin-top: 4px; }
.ticks { width: 97px; flex: none; font-size: 22px; color: #7f8389; }
.tk { height: 44.250px; display: flex; align-items: center; justify-content: flex-end; white-space: nowrap; }
.tk s { width: 9px; height: 2px; background: #5c6068; margin-left: 10px; flex: none; }
.zero { color: #e6e6e6; }
.zero s { background: #e6e6e6; }
.cbar { width: 12px; height: 354px; margin: 22px 0 0 26px; border-radius: 4px; background: #2a2f3a; }

.psettings { flex: 1; background: #1b2633; display: flex; border-bottom: 2px solid #212b38; }
.pgroup { flex: none; padding-top: 34px; }
.settings { width: 858px; padding-left: 50px; }
.tuning { flex: 1; padding-left: 50px; }
.pgroup h2 { margin: 0; font-size: 30px; line-height: 34px; font-weight: 600; color: #ced2d8; letter-spacing: -.2px; }
.pdiv { width: 2px; height: 302px; margin-top: 32px; background: #384657; flex: none; }
.pcols { display: flex; margin-top: 50px; }
.pcol { display: flex; flex-direction: column; align-items: center; flex: none; }
.ca { width: 158px; align-items: flex-start; }
.ca .plab, .ca .pval { align-self: center; margin-left: -6px; }
.cb { width: 200px; margin-left: 109px; margin-top: -3px; }
.cc { width: 200px; margin-left: 89px; margin-top: -3px; }
.cd { width: 168px; margin-left: -5px; }
.ce { width: 200px; margin-left: 121px; margin-top: -3px; }
.cb .pval, .cc .pval, .ce .pval { margin-top: 5px; }
.blue-btn { height: 64px; border-radius: 12px; background: #5fb8e0; color: #0c1118; font-size: 22px; line-height: 28px; text-align: center; display: flex; align-items: center; justify-content: center; box-shadow: 0 3px 8px rgba(0,0,0,.3); flex: none; }
.b-neural { width: 151px; margin-left: 4px; }
.b-global { width: 168px; }
.dimmed { color: #4e5763; margin-top: 59px; }
.faded { color: #35607e; margin-top: 3px; }
.faded svg { color: #4e5763; }
.knob { margin-top: 15px; flex: none; }
.ktrack { fill: none; stroke: #232e3c; stroke-width: 7; stroke-linecap: round; }
.karc { fill: none; stroke: #5ec8f5; stroke-width: 4; }
.kshadow { fill: #141b25; }
.kface { fill: url(#knobface); }
.kptr { stroke: #5ec8f5; stroke-width: 2; fill: none; }
.pfoot { height: 75px; flex: none; background: #272727; display: flex; align-items: center; justify-content: center; font-size: 40px; color: #fff; letter-spacing: -.6px; }
```
